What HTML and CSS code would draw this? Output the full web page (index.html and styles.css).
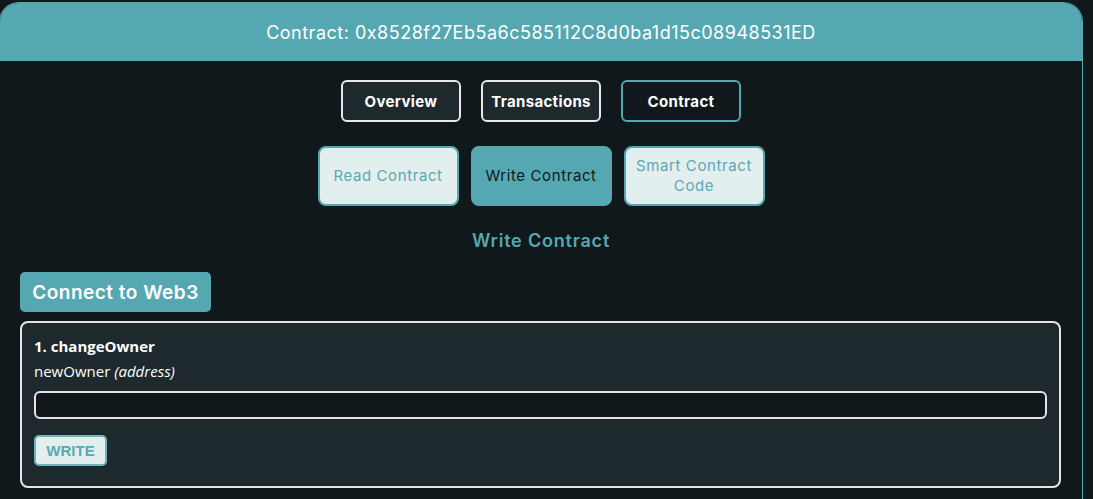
FILE: index.html
```html
<!DOCTYPE html>
<html>
<head>
<meta charset="utf-8">
<link rel="stylesheet" href="styles.css">
</head>
<body>
<div class="panel">
  <div class="panel-header">Contract: 0x8528f27Eb5a6c585112C8d0ba1d15c08948531ED</div>
  <div class="panel-body">
    <div class="tabs">
      <button class="tab">Overview</button>
      <button class="tab">Transactions</button>
      <button class="tab tab-active">Contract</button>
    </div>
    <div class="subtabs">
      <button class="subtab">Read Contract</button>
      <button class="subtab subtab-active">Write Contract</button>
      <button class="subtab">Smart Contract<br>Code</button>
    </div>
    <h2 class="section-title">Write Contract</h2>
    <div class="connect-row">
      <button class="connect">Connect to Web3</button>
    </div>
    <div class="fn-card">
      <div class="fn-name">1. changeOwner</div>
      <div class="fn-param">newOwner <em>(address)</em></div>
      <input class="fn-input" type="text">
      <button class="fn-write">WRITE</button>
    </div>
  </div>
</div>
</body>
</html>
```
FILE: styles.css
```css
html, body {
  margin: 0;
  padding: 0;
  background: #11181b;
  overflow: hidden;
}
body {
  padding-top: 2px;
  font-family: "Inter", "Liberation Sans", sans-serif;
}
.panel {
  width: 1084px;
  margin-left: -1px;
  border: 1px solid #55a8b2;
  border-bottom: none;
  border-radius: 20px 20px 0 0;
  min-height: 520px;
  box-sizing: border-box;
}
.panel-header {
  background: #55a8b2;
  height: 57px;
  border-radius: 19px 19px 0 0;
  display: flex;
  align-items: center;
  justify-content: center;
  color: #ffffff;
  font-size: 18px;
  font-weight: 400;
  letter-spacing: 0.5px;
  padding-top: 1px;
}
.panel-body {
  padding: 19px 20px 0 20px;
}
.tabs {
  display: flex;
  justify-content: center;
  gap: 20px;
}
.tab {
  width: 120px;
  height: 42px;
  border: 2px solid #e8e8e8;
  border-radius: 6px;
  background: #1d292d;
  color: #ffffff;
  font-family: "Inter", sans-serif;
  font-weight: 700;
  font-size: 15px;
  letter-spacing: 0.35px;
  padding: 0;
}
.tab-active {
  background: #11181b;
  border-color: #55a8b2;
}
.subtabs {
  margin-top: 24px;
  display: flex;
  justify-content: center;
  gap: 12px;
}
.subtab {
  width: 141px;
  height: 60px;
  border: 2px solid #55a8b2;
  border-radius: 8px;
  background: #e3eeee;
  color: #5aa9b3;
  font-family: "Inter", sans-serif;
  font-size: 15px;
  line-height: 20px;
  letter-spacing: 0.6px;
  padding: 0 4px;
}
.subtab-active {
  background: #55a8b2;
  color: #11181b;
}
.section-title {
  margin: 23px 0 0;
  text-align: center;
  color: #55a8b2;
  font-size: 18px;
  font-weight: 600;
  line-height: 24px;
  letter-spacing: 0.8px;
}
.connect-row {
  margin-top: 19px;
  display: flex;
}
.connect {
  height: 40px;
  width: 191px;
  padding: 0;
  border: none;
  border-radius: 5px;
  background: #55a8b2;
  color: #ffffff;
  font-family: "Inter", sans-serif;
  font-size: 19px;
  font-weight: 600;
  letter-spacing: 0.5px;
}
.fn-card {
  margin-top: 9px;
  margin-right: 1px;
  border: 2px solid #e4e4e4;
  border-radius: 8px;
  background: #1d292d;
  padding: 13px 12px 20px 12px;
  display: flex;
  flex-direction: column;
  align-items: flex-start;
  font-family: "Open Sans", "Noto Sans", sans-serif;
  color: #ffffff;
  height: 167px;
  box-sizing: border-box;
}
.fn-name {
  font-weight: 700;
  font-size: 15px;
  line-height: 20px;
}
.fn-param {
  margin-top: 5px;
  font-size: 15px;
  line-height: 20px;
}
.fn-input {
  margin: 10px 0 0;
  align-self: stretch;
  height: 28px;
  box-sizing: border-box;
  border: 2px solid #e4e4e4;
  border-radius: 6px;
  background: #11181b;
  color: #ffffff;
}
.fn-write {
  margin-top: 16px;
  width: 73px;
  height: 31px;
  border: 2px solid #6db3bb;
  border-radius: 5px;
  background: #e3eeee;
  color: #5aa9b3;
  font-family: "Liberation Sans", Arial, sans-serif;
  font-weight: 700;
  font-size: 15px;
  padding: 0;
}
```
